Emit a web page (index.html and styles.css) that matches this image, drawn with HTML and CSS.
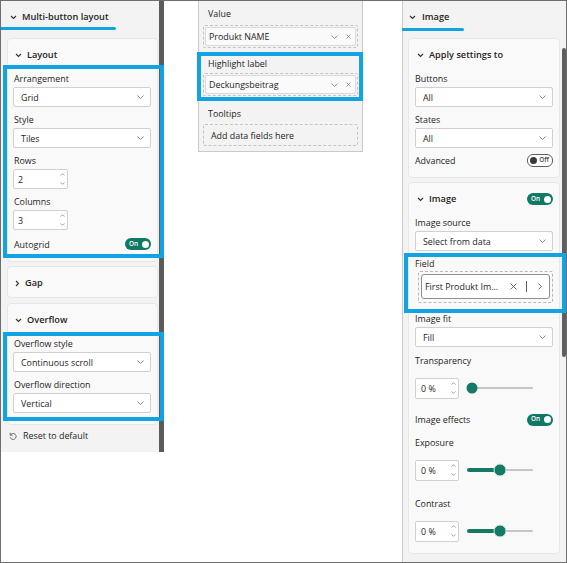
FILE: index.html
```html
<!DOCTYPE html>
<html lang="en">
<head>
<meta charset="utf-8">
<title>Format pane</title>
<link rel="stylesheet" href="styles.css">
</head>
<body>
<div class="screen">

  <aside class="pane pane-left">
    <div class="pane-head">
      <svg class="ico" width="7" height="5" viewBox="0 0 7 5"><path d="M1 1l2.5 2.5L6 1" fill="none" stroke="#323130" stroke-width="1.1"/></svg>
      <span>Multi-button layout</span>
    </div>
    <div class="underline u-left"></div>

    <section class="card card-first">
      <div class="card-title">
        <svg class="ico" width="7" height="5" viewBox="0 0 7 5"><path d="M1 1l2.5 2.5L6 1" fill="none" stroke="#323130" stroke-width="1.1"/></svg>
        <span>Layout</span>
      </div>
      <div class="hl hl-layout stack">
        <div class="field">
          <div class="lbl">Arrangement</div>
          <div class="dd"><span>Grid</span><svg width="7" height="4" viewBox="0 0 7 4"><path d="M.5.5l3 3 3-3" fill="none" stroke="#7a7876" stroke-width=".9"/></svg></div>
        </div>
        <div class="field">
          <div class="lbl">Style</div>
          <div class="dd"><span>Tiles</span><svg width="7" height="4" viewBox="0 0 7 4"><path d="M.5.5l3 3 3-3" fill="none" stroke="#7a7876" stroke-width=".9"/></svg></div>
        </div>
        <div class="field">
          <div class="lbl">Rows</div>
          <div class="num num-l"><span>2</span><svg width="5" height="14" viewBox="0 0 5 14"><path d="M.6 3.6l1.9-1.9 1.9 1.9M.6 10.4l1.9 1.9 1.9-1.9" fill="none" stroke="#8a8886" stroke-width=".8"/></svg></div>
        </div>
        <div class="field">
          <div class="lbl">Columns</div>
          <div class="num num-l"><span>3</span><svg width="5" height="14" viewBox="0 0 5 14"><path d="M.6 3.6l1.9-1.9 1.9 1.9M.6 10.4l1.9 1.9 1.9-1.9" fill="none" stroke="#8a8886" stroke-width=".8"/></svg></div>
        </div>
        <div class="toggle-row tr-tall">
          <span class="lbl">Autogrid</span>
          <span class="tgl on"><span>On</span><span class="knob"></span></span>
        </div>
      </div>
    </section>

    <section class="card card-gap">
      <div class="card-title title-closed">
        <svg class="ico" width="5" height="7" viewBox="0 0 5 7"><path d="M1 1l2.5 2.5L1 6" fill="none" stroke="#323130" stroke-width="1.1"/></svg>
        <span>Gap</span>
      </div>
    </section>

    <section class="card card-overflow">
      <div class="card-title">
        <svg class="ico" width="7" height="5" viewBox="0 0 7 5"><path d="M1 1l2.5 2.5L6 1" fill="none" stroke="#323130" stroke-width="1.1"/></svg>
        <span>Overflow</span>
      </div>
      <div class="hl hl-overflow stack">
        <div class="field">
          <div class="lbl">Overflow style</div>
          <div class="dd"><span>Continuous scroll</span><svg width="7" height="4" viewBox="0 0 7 4"><path d="M.5.5l3 3 3-3" fill="none" stroke="#7a7876" stroke-width=".9"/></svg></div>
        </div>
        <div class="field">
          <div class="lbl">Overflow direction</div>
          <div class="dd"><span>Vertical</span><svg width="7" height="4" viewBox="0 0 7 4"><path d="M.5.5l3 3 3-3" fill="none" stroke="#7a7876" stroke-width=".9"/></svg></div>
        </div>
      </div>
    </section>

    <div class="reset">
      <svg width="8" height="8" viewBox="0 0 8 8"><path d="M1.2 .8v2.4h2.4" fill="none" stroke="#605e5c" stroke-width=".9"/><path d="M1.4 3.1A3 3 0 1 1 1.2 5.2" fill="none" stroke="#605e5c" stroke-width=".9"/></svg>
      <span>Reset to default</span>
    </div>
  </aside>

  <section class="pane pane-mid">
    <div class="m-lbl">Value</div>
    <div class="well">
      <div class="pill">
        <span class="pill-txt">Produkt NAME</span>
        <svg width="7" height="4" viewBox="0 0 7 4"><path d="M.5.5l3 3 3-3" fill="none" stroke="#8a8886" stroke-width=".9"/></svg>
        <svg class="x" width="5" height="5" viewBox="0 0 5 5"><path d="M.5.5l4 4M4.5.5l-4 4" fill="none" stroke="#8a8886" stroke-width=".8"/></svg>
      </div>
    </div>
    <div class="hl hl-mid">
      <div class="m-lbl">Highlight label</div>
      <div class="well">
        <div class="pill">
          <span class="pill-txt">Deckungsbeitrag</span>
          <svg width="7" height="4" viewBox="0 0 7 4"><path d="M.5.5l3 3 3-3" fill="none" stroke="#8a8886" stroke-width=".9"/></svg>
          <svg class="x" width="5" height="5" viewBox="0 0 5 5"><path d="M.5.5l4 4M4.5.5l-4 4" fill="none" stroke="#8a8886" stroke-width=".8"/></svg>
        </div>
      </div>
    </div>
    <div class="m-lbl m-lbl-tip">Tooltips</div>
    <div class="well well-empty">Add data fields here</div>
  </section>

  <aside class="pane pane-right">
    <div class="pane-head head-right">
      <svg class="ico" width="7" height="5" viewBox="0 0 7 5"><path d="M1 1l2.5 2.5L6 1" fill="none" stroke="#323130" stroke-width="1.1"/></svg>
      <span>Image</span>
    </div>
    <div class="underline u-right"></div>

    <section class="card card-first">
      <div class="card-title">
        <svg class="ico" width="7" height="5" viewBox="0 0 7 5"><path d="M1 1l2.5 2.5L6 1" fill="none" stroke="#323130" stroke-width="1.1"/></svg>
        <span>Apply settings to</span>
      </div>
      <div class="card-body stack body-apply">
        <div class="field">
          <div class="lbl">Buttons</div>
          <div class="dd"><span>All</span><svg width="7" height="4" viewBox="0 0 7 4"><path d="M.5.5l3 3 3-3" fill="none" stroke="#7a7876" stroke-width=".9"/></svg></div>
        </div>
        <div class="field">
          <div class="lbl">States</div>
          <div class="dd"><span>All</span><svg width="7" height="4" viewBox="0 0 7 4"><path d="M.5.5l3 3 3-3" fill="none" stroke="#7a7876" stroke-width=".9"/></svg></div>
        </div>
        <div class="toggle-row">
          <span class="lbl">Advanced</span>
          <span class="tgl off"><span class="knob"></span><span>Off</span></span>
        </div>
      </div>
    </section>

    <section class="card card-image">
      <div class="card-title title-split">
        <span class="title-main">
          <svg class="ico" width="7" height="5" viewBox="0 0 7 5"><path d="M1 1l2.5 2.5L6 1" fill="none" stroke="#323130" stroke-width="1.1"/></svg>
          <span>Image</span>
        </span>
        <span class="tgl on"><span>On</span><span class="knob"></span></span>
      </div>
      <div class="card-body body-image">
        <div class="field">
          <div class="lbl">Image source</div>
          <div class="dd"><span>Select from data</span><svg width="7" height="4" viewBox="0 0 7 4"><path d="M.5.5l3 3 3-3" fill="none" stroke="#7a7876" stroke-width=".9"/></svg></div>
        </div>

        <div class="hl hl-right">
          <div class="lbl lbl-tight">Field</div>
          <div class="well well-field">
            <div class="pill pill-field">
              <span class="pill-txt">First Produkt Im...</span>
              <svg class="fx" width="7" height="7" viewBox="0 0 7 7"><path d="M.6.6l5.8 5.8M6.4.6L.6 6.4" fill="none" stroke="#605e5c" stroke-width=".9"/></svg>
              <span class="sep"></span>
              <svg class="fgo" width="4" height="7" viewBox="0 0 4 7"><path d="M.6.6l2.8 2.9L.6 6.4" fill="none" stroke="#605e5c" stroke-width=".9"/></svg>
            </div>
          </div>
        </div>

        <div class="field">
          <div class="lbl">Image fit</div>
          <div class="dd"><span>Fill</span><svg width="7" height="4" viewBox="0 0 7 4"><path d="M.5.5l3 3 3-3" fill="none" stroke="#7a7876" stroke-width=".9"/></svg></div>
        </div>

        <div class="lbl sp-6">Transparency</div>
        <div class="slider-row">
          <div class="num num-r"><span>0 %</span><svg width="5" height="14" viewBox="0 0 5 14"><path d="M.6 3.6l1.9-1.9 1.9 1.9M.6 10.4l1.9 1.9 1.9-1.9" fill="none" stroke="#8a8886" stroke-width=".8"/></svg></div>
          <svg width="70" height="14" viewBox="0 0 70 14"><line x1="6" y1="7" x2="66" y2="7" stroke="#c8c6c4" stroke-width="2" stroke-linecap="round"/><circle cx="6" cy="7" r="5.5" fill="#147a65"/></svg>
        </div>

        <div class="toggle-row sp-8">
          <span class="lbl">Image effects</span>
          <span class="tgl on"><span>On</span><span class="knob"></span></span>
        </div>

        <div class="lbl sp-8">Exposure</div>
        <div class="slider-row">
          <div class="num num-r"><span>0 %</span><svg width="5" height="14" viewBox="0 0 5 14"><path d="M.6 3.6l1.9-1.9 1.9 1.9M.6 10.4l1.9 1.9 1.9-1.9" fill="none" stroke="#8a8886" stroke-width=".8"/></svg></div>
          <svg width="70" height="14" viewBox="0 0 70 14"><line x1="34" y1="7" x2="66" y2="7" stroke="#c8c6c4" stroke-width="2" stroke-linecap="round"/><line x1="3" y1="7" x2="34" y2="7" stroke="#147a65" stroke-width="4" stroke-linecap="round"/><circle cx="34" cy="7" r="6" fill="#147a65" stroke="#d5e6e1" stroke-width="1"/></svg>
        </div>

        <div class="lbl sp-10">Contrast</div>
        <div class="slider-row">
          <div class="num num-r"><span>0 %</span><svg width="5" height="14" viewBox="0 0 5 14"><path d="M.6 3.6l1.9-1.9 1.9 1.9M.6 10.4l1.9 1.9 1.9-1.9" fill="none" stroke="#8a8886" stroke-width=".8"/></svg></div>
          <svg width="70" height="14" viewBox="0 0 70 14"><line x1="34" y1="7" x2="66" y2="7" stroke="#c8c6c4" stroke-width="2" stroke-linecap="round"/><line x1="3" y1="7" x2="34" y2="7" stroke="#147a65" stroke-width="4" stroke-linecap="round"/><circle cx="34" cy="7" r="6" fill="#147a65" stroke="#d5e6e1" stroke-width="1"/></svg>
        </div>
      </div>
    </section>

    <div class="scrollbar"></div>
  </aside>

</div>
</body>
</html>
```

FILE: styles.css
```css
* { box-sizing: border-box; }

html, body {
  margin: 0;
  padding: 0;
}

body {
  background: #ffffff;
  font-family: "Open Sans", "Noto Sans", sans-serif;
  font-size: 8.9px;
  color: #252423;
}

.screen {
  width: 567px;
  height: 563px;
  border: 1px solid #6e6e6e;
  display: flex;
  align-items: flex-start;
  overflow: hidden;
  background: #ffffff;
}

/* ---------- panes ---------- */
.pane {
  background: #f3f3f3;
  display: flex;
  flex-direction: column;
  flex: none;
}

.pane-left {
  width: 163px;
  height: 451px;
  border-right: 5px solid #5b5b5b;
}

.pane-mid {
  margin-left: 34px;
  width: 165px;
  height: 151px;
  border: 1px solid #cacaca;
  border-top: 0;
  padding: 5px 0 4px;
}

.pane-right {
  margin-left: 39px;
  width: 164px;
  height: 561px;
  border-left: 1px solid #cacaca;
  position: relative;
}

.pane-head {
  display: flex;
  align-items: center;
  gap: 5px;
  padding: 8px 0 2px 9px;
  line-height: 16px;
  font-weight: 600;
  font-size: 9.2px;
}

.head-right {
  padding-left: 6px;
  gap: 6px;
}

.underline {
  height: 3px;
  background: #12a3e3;
  border-radius: 0 2px 2px 0;
}

.u-left { width: 115px; }
.u-right { width: 62px; margin-left: -1px; margin-top: 1px; }

/* ---------- cards ---------- */
.card {
  background: #f9f9f9;
  border: 1px solid #e7e7e7;
  border-radius: 4px;
}

.pane-left .card { margin-left: 6px; margin-right: 1px; }
.pane-right .card { margin-left: 5px; width: 152px; }

.pane-left .card-first { margin-top: 8px; }
.pane-right .card-first { margin-top: 7px; }
.pane-left .card-gap { margin-top: 4px; }
.pane-left .card-overflow { margin-top: 5px; }
.pane-right .card-image { margin-top: 4px; }

.card-title {
  display: flex;
  align-items: center;
  gap: 5px;
  padding: 8px 7px 0;
  line-height: 16px;
  font-weight: 600;
  font-size: 9.2px;
}

.pane-right .card-title { padding-left: 8px; }

.title-closed { padding-bottom: 6px; }

.title-split {
  justify-content: space-between;
  padding-right: 6px;
}

.title-main {
  display: flex;
  align-items: center;
  gap: 5px;
}

.card-body { padding: 0 6px; }
.body-apply { margin-top: 8px; padding-bottom: 9px; }
.body-image { margin-top: 8px; padding-bottom: 6px; display: flex; flex-direction: column; }

.stack {
  display: flex;
  flex-direction: column;
  gap: 5px;
}

.ico { flex: none; }

/* ---------- highlight boxes ---------- */
.hl {
  border: 4px solid #12a3e3;
  position: relative;
  z-index: 1;
}

.hl-layout {
  margin: 2px -7px 3px -5px;
  padding: 2px 9px 1px 6px;
}

.hl-overflow {
  margin: 4px -7px 3px -5px;
  padding: 0 9px 4px 6px;
}

.hl-mid {
  margin: 4px -1px 0 -2px;
  padding: 0 1px 1px 2px;
}

.hl-right {
  margin: 2px -13px -2px -11px;
  padding: 0 9px 6px 7px;
}

/* ---------- fields ---------- */
.field {
  display: flex;
  flex-direction: column;
  gap: 1px;
}

.lbl {
  line-height: 15px;
  color: #252423;
}

.hl-layout .lbl,
.hl-overflow .lbl { padding-left: 1px; }

.lbl-tight { line-height: 14px; }

.dd {
  height: 20px;
  background: #ffffff;
  border: 1px solid #d2d0ce;
  border-radius: 2px;
  display: flex;
  align-items: center;
  justify-content: space-between;
  padding: 0 6px 0 7px;
}

.num {
  background: #ffffff;
  border: 1px solid #d2d0ce;
  border-radius: 2px;
  display: flex;
  align-items: center;
  justify-content: space-between;
}

.num-l {
  width: 55px;
  height: 20px;
  padding: 0 2px 0 4px;
}

.num-r {
  width: 44px;
  height: 21px;
  padding: 0 2px 0 5px;
  flex: none;
}

.toggle-row {
  display: flex;
  align-items: center;
  justify-content: space-between;
  height: 15px;
}

.tr-tall { height: 18px; }

.tgl {
  width: 26px;
  height: 12px;
  border-radius: 6px;
  display: inline-flex;
  align-items: center;
  justify-content: space-between;
  font-size: 6.4px;
  font-weight: 600;
  line-height: 1;
  flex: none;
}

.tgl.on {
  background: #117865;
  color: #ffffff;
  padding: 0 2px 0 4px;
}

.tgl.off {
  background: #ffffff;
  border: 1px solid #5f5f5f;
  color: #4a4a4a;
  padding: 0 3px 0 2px;
  height: 13px;
}

.knob {
  width: 7px;
  height: 7px;
  border-radius: 50%;
  background: #ffffff;
}

.tgl.off .knob { background: #3b3a39; }

.slider-row {
  display: flex;
  align-items: center;
  gap: 7px;
  height: 32px;
  margin-top: 4px;
}

.sp-6 { margin-top: 6px; }
.sp-8 { margin-top: 8px; }
.sp-10 { margin-top: 10px; }

/* ---------- middle pane wells ---------- */
.m-lbl {
  line-height: 15px;
  padding-left: 9px;
}

.hl-mid .m-lbl { padding-left: 5px; }
.m-lbl-tip { margin-top: 5px; }

.well {
  border: 1px dashed #c4c4c4;
  border-radius: 2px;
  padding: 1px;
  margin: 4px 4px 0;
}

.hl-mid .well { margin: 2px 0 0; }

.well-empty {
  margin-top: 3px;
  height: 22px;
  padding: 0 0 0 7px;
  display: flex;
  align-items: center;
}

.pill {
  height: 19px;
  background: #fafafa;
  border: 1px solid #dadada;
  border-radius: 2px;
  display: flex;
  align-items: center;
  padding: 0 4px 0 3px;
}

.pill-txt { flex: 1; }
.pill .x { margin-left: 8px; }

.well-field {
  margin: 0 0 0 3px;
  padding: 2px 2px 3px;
  border-color: #b8b8b8;
}

.pill-field {
  height: 25px;
  background: #ffffff;
  border: 1px solid #8f8f8f;
  border-radius: 3px;
  padding: 0 7px 0 3px;
}

.sep {
  width: 1px;
  height: 11px;
  background: #605e5c;
  margin: 0 11px 0 9px;
}

/* ---------- reset ---------- */
.reset {
  display: flex;
  align-items: center;
  gap: 6px;
  margin: 3px 0 0 8px;
  line-height: 16px;
}

/* ---------- scrollbar ---------- */
.scrollbar {
  position: absolute;
  right: 0;
  top: 47px;
  width: 4px;
  height: 309px;
  border-radius: 2px;
  background: #5f5f5f;
}
```
